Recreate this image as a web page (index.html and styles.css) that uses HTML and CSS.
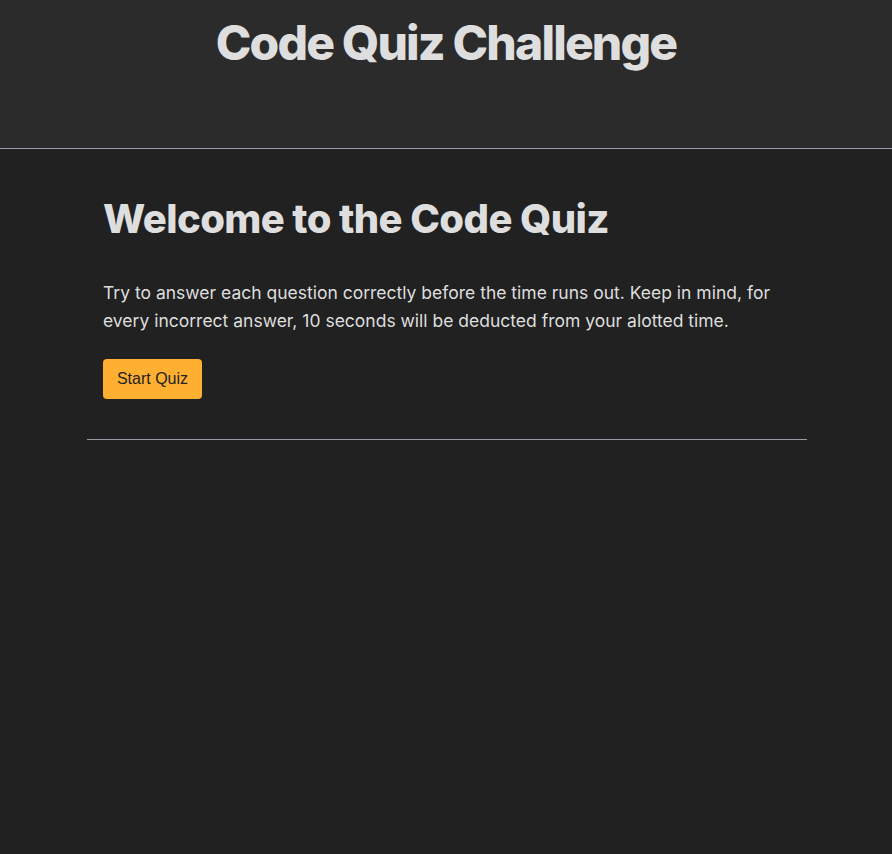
FILE: index.html
```html
<!DOCTYPE html>
<html lang="en">
<head>
<meta charset="utf-8">
<title>Code Quiz Challenge</title>
<link rel="stylesheet" href="styles.css">
</head>
<body>
<header class="site-header">
  <h1 class="site-title">Code Quiz Challenge</h1>
</header>
<main class="container">
  <section class="intro">
    <h2 class="intro-title">Welcome to the Code Quiz</h2>
    <p class="intro-text">Try to answer each question correctly before the time runs out. Keep in mind, for every incorrect answer, 10 seconds will be deducted from your alotted time.</p>
    <button class="start-btn" type="button">Start Quiz</button>
  </section>
  <hr class="divider">
</main>
</body>
</html>
```
FILE: styles.css
```css
html, body {
  margin: 0;
  padding: 0;
}
body {
  background: #212121;
  color: #dedede;
  font-family: Inter, "Noto Sans", sans-serif;
  min-height: 854px;
}
.site-header {
  background: #2b2b2b;
  height: 148px;
  border-bottom: 1px solid #9b9bb4;
  display: flex;
  justify-content: center;
}
.site-title {
  margin: 14px 0 0;
  font-size: 48px;
  font-weight: 800;
  letter-spacing: -1.85px;
  line-height: 58px;
  color: #dedede;
}
.container {
  width: 720px;
  margin: 0 auto 0 87px;
}
.intro {
  padding: 0 16px;
}
.intro-title {
  margin: 46px 0 0;
  font-size: 40px;
  font-weight: 800;
  letter-spacing: -0.6px;
  line-height: 48px;
  color: #dedede;
}
.intro-text {
  margin: 36px 0 0;
  font-size: 17.5px;
  line-height: 28px;
  color: #dedede;
}
.start-btn {
  margin-top: 24px;
  width: 99px;
  height: 40px;
  background: #ffb030;
  border: none;
  border-radius: 4px;
  color: #222;
  font-family: "Liberation Sans", Arial, sans-serif;
  font-size: 16px;
  padding: 0;
}
.divider {
  margin: 40px 0 0;
  border: none;
  border-top: 1px solid #9a9aa6;
  height: 0;
}
```
